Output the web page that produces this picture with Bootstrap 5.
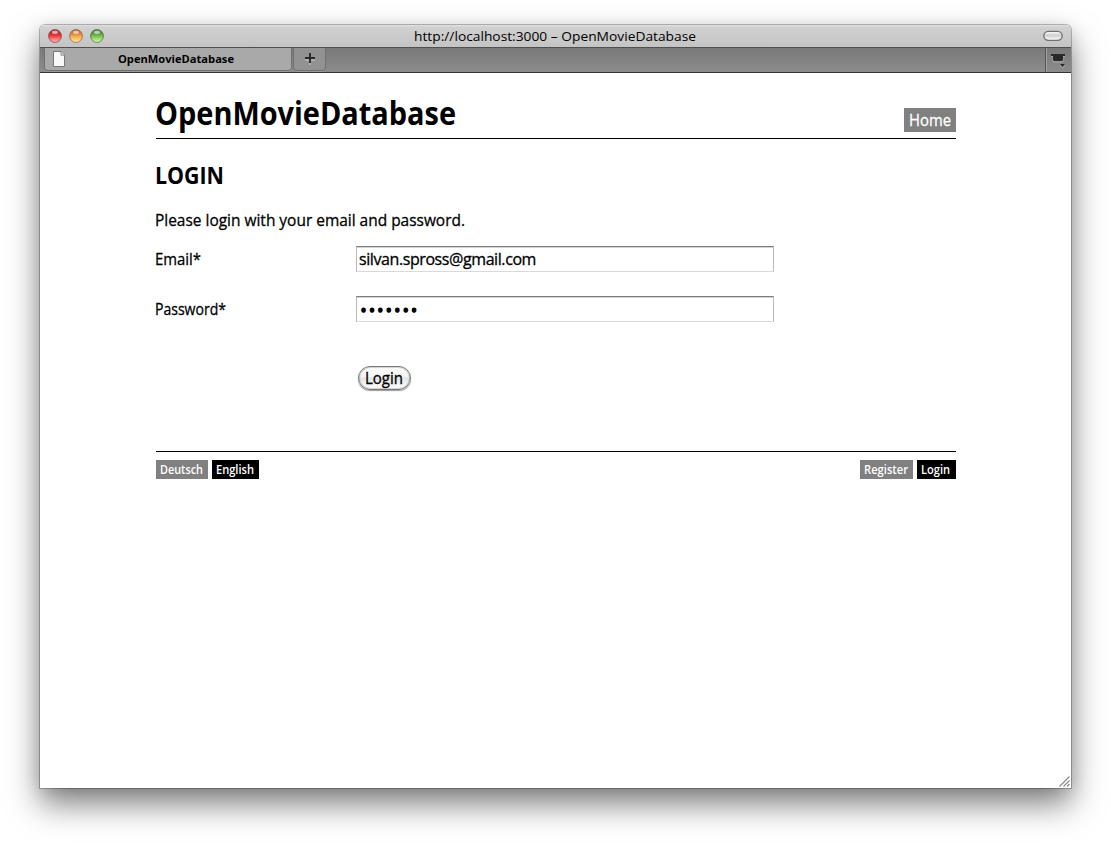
<!DOCTYPE html>
<html lang="en">
<head>
<meta charset="utf-8">
<title>OpenMovieDatabase</title>
<link href="https://cdn.jsdelivr.net/npm/bootstrap@5.3.0/dist/css/bootstrap.min.css" rel="stylesheet">
<style>
body{background:#fff;color:#000;font-family:"Open Sans","Noto Sans",sans-serif;font-size:16px;line-height:20px;width:1111px;height:843px;overflow:hidden;padding:25px 0 0 40px}
.window{width:1031px;height:763px;background:#fff;border-radius:5px 5px 0 0;box-shadow:0 0 0 1px rgba(0,0,0,.25),0 16px 32px rgba(0,0,0,.5),0 2px 16px rgba(0,0,0,.1)}
.titlebar{height:23px;background:linear-gradient(#e3e3e3 0,#d1d1d1 2px,#c4c4c4);border-bottom:1px solid #505050;border-radius:5px 5px 0 0;padding:0 8px}
.caption-text{font-size:13px;margin-left:-2px}
.lights{width:70px}
.tabs{height:25px;background:linear-gradient(#797979,#8c8c8c);border-bottom:1px solid #343434;padding-left:4px}
.tab{height:23px;background:#a9a9a9;border:1px solid #707070;border-top:0;border-radius:0 0 4px 4px;box-shadow:0 1px 0 #999}
.tab-main{width:248px;padding-left:8px;font-size:11px;font-weight:700}
.tab-title{margin-left:53px}
.tab-new{width:33px;margin-left:1px;background:#929292}
.tab-list{width:26px;height:24px;border-left:1px solid #555;box-shadow:inset 1px 0 #a2a2a2}
.page{width:800px;margin-left:116px}
.page-head{height:66px;border-bottom:1px solid #000}
h1{font-size:32px;line-height:40px;font-weight:700;padding-top:20px;margin-left:-1px}
h2{font-size:24px;line-height:30px;font-weight:700;padding-top:21px;margin-left:-1px}
.intro{padding-top:20px;margin-left:-1px}
.intro,.form-line,.aqua,.pill-lg{-webkit-text-stroke:.3px}
.fit{display:inline-block;transform-origin:0 50%;white-space:nowrap}
.pill{display:flex;align-items:center;color:#fff;background:#808080;text-decoration:none;white-space:nowrap;padding-left:4px}
.pill.current{background:#000}
.pill-lg{width:52px;height:24px;margin-top:35px;padding:0 0 0 5px}
.page-foot{height:29px;margin-top:61px;border-top:1px solid #000;padding-top:8px;font-size:12px;font-weight:600}
.page-foot .pill{height:19px}
.w-47{width:47px}.w-52{width:52px}.w-53{width:53px}.w-39{width:39px}
.form-line{margin-top:24px}
.form-line:first-child{margin-top:16px}
.label-col{width:201px;margin-left:-1px}
.field{width:418px;height:26px;padding:0 2px;border:1px solid;border-color:#7d7d7d #b9b9b9 #d9d9d9 #b9b9b9;box-shadow:inset 0 1px #d4d4d4;font-size:16px;color:#000;border-radius:0;background:#fff;outline:0}
.field-secret{padding:1px 0 0 3.5px;-webkit-text-stroke:1.3px}
.actions{margin:44px 0 0 201px}
.aqua{width:53px;height:24px;margin:0 1px;padding:0 1px 0 0;border:1px solid #777;border-radius:12px;background:linear-gradient(#fff,#f4f4f4 45%,#e4e4e4 50%,#fff);box-shadow:inset 0 0 1px 1px rgba(0,0,0,.18),0 1px 1px rgba(0,0,0,.4);color:#000;font-size:16px}
</style>
</head>
<body>
<div class="window d-flex flex-column position-relative">
  <div class="titlebar d-flex align-items-center justify-content-between flex-shrink-0">
    <div class="lights d-flex"><svg width="57" height="16" viewBox="0 0 57 16">
      <defs>
        <linearGradient id="r" x2="0" y2="1"><stop stop-color="#8f1b20"/><stop offset=".5" stop-color="#ef3b40"/><stop offset="1" stop-color="#ffc0c0"/></linearGradient>
        <linearGradient id="o" x2="0" y2="1"><stop stop-color="#a8501c"/><stop offset=".5" stop-color="#f5a34a"/><stop offset="1" stop-color="#fff19f"/></linearGradient>
        <linearGradient id="g" x2="0" y2="1"><stop stop-color="#356a22"/><stop offset=".5" stop-color="#79bb50"/><stop offset="1" stop-color="#dcffad"/></linearGradient>
      </defs>
      <g stroke-width="1" stroke-opacity=".75"><circle cx="7" cy="8" r="6.4" fill="url(#r)" stroke="#8c3a3c"/><circle cx="28" cy="8" r="6.4" fill="url(#o)" stroke="#95603a"/><circle cx="49" cy="8" r="6.4" fill="url(#g)" stroke="#44702f"/></g>
      <g fill="#fff" opacity=".6"><ellipse cx="7" cy="4.3" rx="3" ry="1.7"/><ellipse cx="28" cy="4.3" rx="3" ry="1.7"/><ellipse cx="49" cy="4.3" rx="3" ry="1.7"/></g>
    </svg></div>
    <div class="caption-text"><span class="fit" data-w="282">http://localhost:3000 – OpenMovieDatabase</span></div>
    <div class="lights d-flex justify-content-end"><svg width="20" height="12" viewBox="0 0 20 12"><defs><linearGradient id="p" x2="0" y2="1"><stop stop-color="#fff"/><stop offset=".45" stop-color="#d0d0d0"/><stop offset="1" stop-color="#fff"/></linearGradient></defs><rect x=".8" y="1.3" width="18.4" height="9" rx="4.5" fill="url(#p)" stroke="#6f6f6f" stroke-width="1.3"/></svg></div>
  </div>
  <div class="tabs d-flex flex-shrink-0">
    <div class="tab tab-main d-flex align-items-center">
      <svg width="12" height="16" viewBox="0 0 12 16"><path d="M.5.5h7.5l3.5 3.7v11.3H.5z" fill="#f8f8f8" stroke="#777"/><path d="M8 .5v3.7h3.5" fill="#ddd" stroke="#777" stroke-width=".8"/></svg>
      <span class="fit tab-title" data-w="116">OpenMovieDatabase</span>
    </div>
    <div class="tab tab-new d-flex align-items-center justify-content-center"><svg width="12" height="12" viewBox="0 0 12 12"><path d="M6 1v10M1 6h10" stroke="#bbb" stroke-width="1.6" transform="translate(0 1)"/><path d="M6 0v10M1 5h10" stroke="#272727" stroke-width="1.9"/></svg></div>
    <div class="tab-list ms-auto"><svg class="d-block" width="25" height="24" viewBox="0 0 25 24"><path d="M5 8.5h14M7 8v5l1 1h8l1-1V8M14 17h5l-2.5 3z" fill="none" stroke="#aaa"/><path d="M5 6h14v2h-2v4l-1 1H8l-1-1V8H5zM14 16h5l-2.5 3z" fill="#292929"/></svg></div>
  </div>
  <main class="page">
    <header class="page-head d-flex justify-content-between">
      <h1 class="mb-0"><span class="fit" data-w="301">OpenMovieDatabase</span></h1>
      <a href="#" class="pill pill-lg"><span class="fit" data-w="42">Home</span></a>
    </header>
    <h2 class="mb-0"><span class="fit" data-w="69">LOGIN</span></h2>
    <p class="intro mb-0"><span class="fit" data-w="310">Please login with your email and password.</span></p>
    <form>
      <div class="form-line d-flex align-items-center">
        <label class="label-col" for="email"><span class="fit" data-w="46">Email*</span></label>
        <input class="field" id="email" type="text" value="silvan.spross@gmail.com" data-w="177">
      </div>
      <div class="form-line d-flex align-items-center">
        <label class="label-col" for="password"><span class="fit" data-w="71">Password*</span></label>
        <input class="field field-secret" id="password" type="text" value="•••••••" data-w="59">
      </div>
      <div class="actions"><button type="button" class="aqua d-flex align-items-center justify-content-center"><span class="fit" data-w="38">Login</span></button></div>
    </form>
    <footer class="page-foot d-flex justify-content-between">
      <div class="d-flex gap-1"><a href="#" class="pill w-52"><span class="fit" data-w="43">Deutsch</span></a><a href="#" class="pill current w-47"><span class="fit" data-w="38">English</span></a></div>
      <div class="d-flex gap-1"><a href="#" class="pill w-53"><span class="fit" data-w="44">Register</span></a><a href="#" class="pill current w-39"><span class="fit" data-w="29">Login</span></a></div>
    </footer>
  </main>
  <svg class="position-absolute bottom-0 end-0" width="13" height="13" viewBox="0 0 13 13"><path d="M1.5 11.5L11.5 1.5M5.5 11.5L11.5 5.5M9 11.5L11.5 9" stroke="#888" stroke-width="1.1"/></svg>
</div>
<script src="https://cdn.jsdelivr.net/npm/bootstrap@5.3.0/dist/js/bootstrap.bundle.min.js"></script>
<script>
document.querySelectorAll('.fit').forEach(function (el) {
  var natural = el.getBoundingClientRect().width, wanted = +el.dataset.w;
  el.style.marginRight = (wanted - natural) + 'px';
  el.style.transform = 'scaleX(' + wanted / natural + ')';
});
// Field values cannot be scaled, so they are tracked to width instead.
document.querySelectorAll('.field').forEach(function (el) {
  var ctx = document.createElement('canvas').getContext('2d');
  ctx.font = '16px "Open Sans"';
  el.style.letterSpacing = (el.dataset.w - ctx.measureText(el.value).width) / el.value.length + 'px';
});
</script>
</body>
</html>
